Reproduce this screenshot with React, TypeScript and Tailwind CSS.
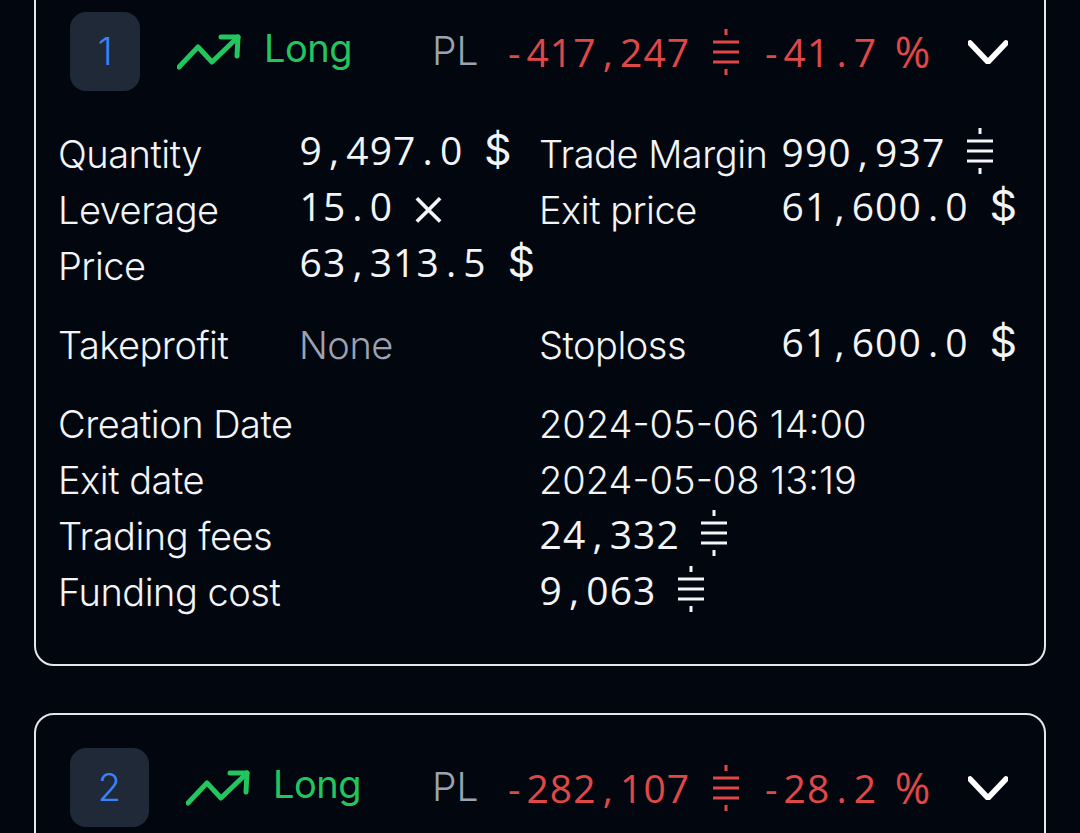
const sans = "font-['Inter','Liberation_Sans',sans-serif]";
const mono = "font-['Open_Sans','Noto_Sans',sans-serif]";

function M({ t, className = "" }: { t: string; className?: string }) {
  return (
    <span className={`${mono} inline-flex text-[39px] font-normal tracking-normal leading-none tabular-nums ${className}`}>
      {t.split("").map((c, i) => (
        <span
          key={i}
          className={`flex justify-center w-[23.4px] ${c === "$" ? "font-['Inter'] text-[43px] leading-[39px]" : c === "%" ? "text-[43px] leading-[39px] mr-[-4px] ml-[-2px] w-[29px]" : ""}`}
        >
          {c === " " ? "\u00a0" : c}
        </span>
      ))}
    </span>
  );
}

function Coin({ className = "" }: { className?: string }) {
  return (
    <svg viewBox="0 0 26 46" className={`w-[26px] h-[46px] shrink-0 ${className}`} fill="none" stroke="currentColor" strokeWidth="3">
      <path d="M13 0v6M0 13h26M0 23h26M0 33h26M13 40v6" />
    </svg>
  );
}

function Trend() {
  return (
    <svg viewBox="0 0 64 36" className="w-[64px] h-[36px] shrink-0" fill="none" stroke="#22c55e" strokeWidth="5" strokeLinecap="round" strokeLinejoin="round">
      <path d="M2 33 21 13l14 15L61 3" />
      <path d="M44 3h17l-1 19" />
    </svg>
  );
}

function Header({ n, w }: { n: string; w: string }) {
  return (
    <div className="flex items-center">
      <div className={`${w} h-[79px] rounded-[16px] bg-[#1f2937] flex items-center justify-center text-[38px] font-light text-[#3b82f6] shrink-0`}>{n}</div>
      <div className="ml-[37px]"><Trend /></div>
      <span className="ml-[23px] mb-[6px] text-[38px] text-[#22c55e] font-normal tracking-[-0.5px]">Long</span>
    </div>
  );
}

function Right({ pl, pct }: { pl: string; pct: string }) {
  return (
    <div className="ml-auto flex items-center">
      <span className="text-[39px] font-light text-[#9ca3af] tracking-normal mr-[24px]">PL</span>
      <span className="flex items-center text-[#e04848]">
        <M t={pl} />
        <Coin className="ml-[23px] mr-[21px]" />
        <M t={pct} />
      </span>
      <svg viewBox="0 0 40 24" className="w-[40px] h-[24px] ml-[45px]" fill="none" stroke="#fff" strokeWidth="5.5" strokeLinecap="round" strokeLinejoin="round">
        <path d="M2 3l18 19L38 3" />
      </svg>
    </div>
  );
}

function Row({ className = "", children }: { className?: string; children: React.ReactNode }) {
  return <div className={`grid grid-cols-[241px_240px_242px_auto] auto-rows-[56px] items-center ml-[-12px] ${className}`}>{children}</div>;
}

export default function App() {
  return (
    <div className={`${sans} h-[833px] overflow-hidden bg-[#02060f] text-[#f3f4f6] px-[34px]`}>
      <div className="mt-[-20px] pt-[30px] pr-[36px] pb-[44px] pl-[34px] border-2 border-[#e5e7eb] rounded-[20px] text-[38px] font-light tracking-[-0.5px]">
        <div className="flex items-center">
          <Header n="1" w="w-[70px]" />
          <Right pl="-417,247" pct="-41.7 %" />
        </div>
        <Row className="mt-[35px]">
          <span>Quantity</span>
          <M t="9,497.0 $" className="mb-[9px]" />
          <span>Trade Margin</span>
          <span className="flex items-center mb-[6px]"><M t="990,937" /><Coin className="ml-[22px]" /></span>

          <span>Leverage</span>
          <span className="flex items-center mb-[9px]"><M t="15.0" /><span className="ml-[17px] h-[39px] text-[58px] leading-[39px] font-light">×</span></span>
          <span>Exit price</span>
          <M t="61,600.0 $" className="mb-[9px]" />

          <span>Price</span>
          <M t="63,313.5 $" className="mb-[9px]" />
        </Row>
        <Row className="mt-[23px]">
          <span>Takeprofit</span>
          <span className="text-[#9ca3af]">None</span>
          <span>Stoploss</span>
          <M t="61,600.0 $" className="mb-[8px]" />
        </Row>
        <Row className="mt-[23px]">
          <span className="col-span-2">Creation Date</span>
          <span className="col-span-2 tracking-normal">2024-05-06 14:00</span>
          <span className="col-span-2">Exit date</span>
          <span className="col-span-2 tracking-normal">2024-05-08 13:19</span>
          <span className="col-span-2">Trading fees</span>
          <span className="col-span-2 flex items-center mb-[6px]"><M t="24,332" /><Coin className="ml-[22px]" /></span>
          <span className="col-span-2">Funding cost</span>
          <span className="col-span-2 flex items-center mb-[6px]"><M t="9,063" /><Coin className="ml-[22px]" /></span>
        </Row>
      </div>
      <div className="mt-[47px] pt-[33px] pr-[36px] pb-[43px] pl-[34px] border-2 border-[#e5e7eb] rounded-[20px]">
        <div className="flex items-center">
          <Header n="2" w="w-[79px]" />
          <Right pl="-282,107" pct="-28.2 %" />
        </div>
      </div>
    </div>
  );
}
